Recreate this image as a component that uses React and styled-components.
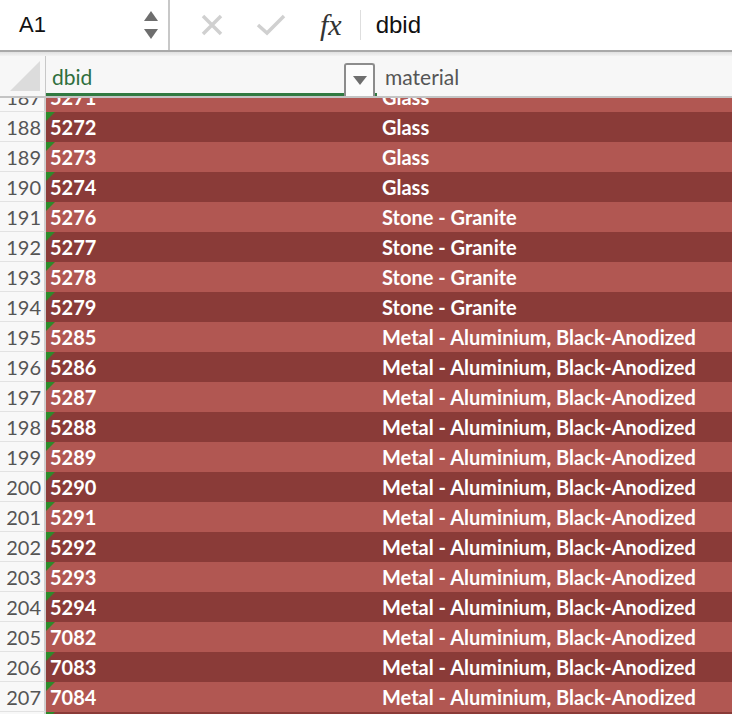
import React from 'react'
import styled, { createGlobalStyle } from 'styled-components'

const Global = createGlobalStyle`
  html, body { margin: 0; padding: 0; background: #fff; }
  body { width: 732px; height: 714px; overflow: hidden; }
`

const Sheet = styled.div`
  width: 732px;
  height: 714px;
  display: flex;
  flex-direction: column;
  overflow: hidden;
  background: #fff;
`

const FormulaBar = styled.div`
  height: 50px;
  display: flex;
  align-items: stretch;
  background: #fff;
  flex-shrink: 0;
`

const NameBox = styled.div`
  width: 170px;
  border-right: 2px solid #c8c8c8;
  display: flex;
  align-items: center;
  justify-content: space-between;
  padding: 0 10px 0 19px;
  box-sizing: border-box;
  font-family: "Liberation Sans", Arial, sans-serif;
  font-size: 22px;
  color: #111;
`

const Spinner = styled.div`
  display: flex;
  flex-direction: column;
  gap: 8px;
  align-items: center;
`

const Tri = styled.div`
  width: 0;
  height: 0;
  border-left: 7px solid transparent;
  border-right: 7px solid transparent;
  ${p => p.up ? 'border-bottom: 10px solid #6e6e6e;' : 'border-top: 10px solid #6e6e6e;'}
`

const Tools = styled.div`
  display: flex;
  align-items: center;
  padding-left: 30px;
  gap: 32px;
`

const Fx = styled.span`
  font-family: "Liberation Serif", "Times New Roman", serif;
  font-style: italic;
  font-size: 30px;
  color: #333;
  margin-left: 2px;
`

const ToolSep = styled.div`
  width: 1px;
  height: 30px;
  background: #dedede;
  margin-left: -14px;
`

const Formula = styled.div`
  display: flex;
  align-items: center;
  padding-left: 15px;
  font-family: "Liberation Sans", Arial, sans-serif;
  font-size: 24px;
  color: #111;
`

const Divider = styled.div`
  height: 6px;
  flex-shrink: 0;
  border-top: 2px solid #a9a9a9;
  background: linear-gradient(#e0e0e0, #f2f2f2);
  box-sizing: border-box;
`

const HeaderRow = styled.div`
  height: 42px;
  flex-shrink: 0;
  display: grid;
  grid-template-columns: 46px 331px 1fr;
  background: #f7f7f7;
  border-bottom: 2px solid #c4c4c4;
  box-sizing: border-box;
`

const Corner = styled.div`
  border-right: 1px solid #c8c8c8;
  display: flex;
  align-items: flex-end;
  justify-content: flex-end;
  padding: 0 5px 5px 0;
`

const ColHead = styled.div`
  position: relative;
  display: flex;
  align-items: center;
  padding-left: ${p => p.pad}px;
  font-family: Lato, "Open Sans", sans-serif;
  font-size: 21px;
  color: ${p => p.active ? '#2f6f3e' : '#555'};
  ${p => p.active && 'box-shadow: inset 0 -3px 0 #317a41;'}
`

const FilterBtn = styled.div`
  position: absolute;
  right: 2px;
  top: 7px;
  width: 31px;
  height: 33px;
  box-sizing: border-box;
  border: 2px solid #8c8c8c;
  border-bottom: none;
  border-radius: 3px 3px 0 0;
  background: #fcfcfc;
  display: flex;
  align-items: center;
  justify-content: center;
`

const Body = styled.div`
  flex: 1;
  overflow: hidden;
`

const Rows = styled.div`
  margin-top: -16px;
`

const Row = styled.div`
  display: grid;
  grid-template-columns: 46px 331px 1fr;
  height: 30px;
`

const RowNum = styled.div`
  background: #f8f8f8;
  border-right: 2px solid #cfcfcf;
  border-bottom: 1px solid #e2e2e2;
  box-sizing: border-box;
  display: flex;
  align-items: center;
  justify-content: flex-end;
  padding-right: 3px;
  font-family: Lato, "Open Sans", sans-serif;
  font-size: 20px;
  color: #555;
`

const Cell = styled.div`
  position: relative;
  display: flex;
  align-items: center;
  padding-left: ${p => p.pad}px;
  background: ${p => p.dark ? '#8a3b38' : '#b15752'};
  font-family: Lato, "Open Sans", sans-serif;
  font-weight: 700;
  font-size: 20px;
  color: #fff;
  white-space: nowrap;
`

const ErrorFlag = styled.div`
  position: absolute;
  left: 0;
  top: 0;
  width: 0;
  height: 0;
  border-top: 9px solid #2d8a2a;
  border-right: 9px solid transparent;
`

const data = [
  [187, '5271', 'Glass'],
  [188, '5272', 'Glass'],
  [189, '5273', 'Glass'],
  [190, '5274', 'Glass'],
  [191, '5276', 'Stone - Granite'],
  [192, '5277', 'Stone - Granite'],
  [193, '5278', 'Stone - Granite'],
  [194, '5279', 'Stone - Granite'],
  [195, '5285', 'Metal - Aluminium, Black-Anodized'],
  [196, '5286', 'Metal - Aluminium, Black-Anodized'],
  [197, '5287', 'Metal - Aluminium, Black-Anodized'],
  [198, '5288', 'Metal - Aluminium, Black-Anodized'],
  [199, '5289', 'Metal - Aluminium, Black-Anodized'],
  [200, '5290', 'Metal - Aluminium, Black-Anodized'],
  [201, '5291', 'Metal - Aluminium, Black-Anodized'],
  [202, '5292', 'Metal - Aluminium, Black-Anodized'],
  [203, '5293', 'Metal - Aluminium, Black-Anodized'],
  [204, '5294', 'Metal - Aluminium, Black-Anodized'],
  [205, '7082', 'Metal - Aluminium, Black-Anodized'],
  [206, '7083', 'Metal - Aluminium, Black-Anodized'],
  [207, '7084', 'Metal - Aluminium, Black-Anodized'],
  [208, '7085', 'Metal - Aluminium, Black-Anodized'],
]

export default function App() {
  return (
    <Sheet>
      <Global />
      <FormulaBar>
        <NameBox>
          A1
          <Spinner>
            <Tri up />
            <Tri />
          </Spinner>
        </NameBox>
        <Tools>
          <svg width="24" height="24" viewBox="0 0 24 24">
            <path d="M3 3 L21 21 M21 3 L3 21" stroke="#d0d0d0" strokeWidth="3.5" />
          </svg>
          <svg width="30" height="24" viewBox="0 0 30 24">
            <path d="M2 12 L11 20 L28 3" stroke="#d0d0d0" strokeWidth="3.5" fill="none" />
          </svg>
          <Fx>fx</Fx>
          <ToolSep />
        </Tools>
        <Formula>dbid</Formula>
      </FormulaBar>
      <Divider />
      <HeaderRow>
        <Corner>
          <svg width="30" height="30" viewBox="0 0 30 30">
            <path d="M30 0 L30 30 L0 30 Z" fill="#dcdcdc" />
          </svg>
        </Corner>
        <ColHead pad={6} active>
          dbid
          <FilterBtn>
            <svg width="14" height="9" viewBox="0 0 14 9">
              <path d="M0 0 L14 0 L7 9 Z" fill="#6e6e6e" />
            </svg>
          </FilterBtn>
        </ColHead>
        <ColHead pad={8}>material</ColHead>
      </HeaderRow>
      <Body>
        <Rows>
          {data.map(([n, id, mat], i) => (
            <Row key={n}>
              <RowNum>{n}</RowNum>
              <Cell pad={4} dark={i % 2 === 1}>
                <ErrorFlag />
                {id}
              </Cell>
              <Cell pad={5} dark={i % 2 === 1}>{mat}</Cell>
            </Row>
          ))}
        </Rows>
      </Body>
    </Sheet>
  )
}
